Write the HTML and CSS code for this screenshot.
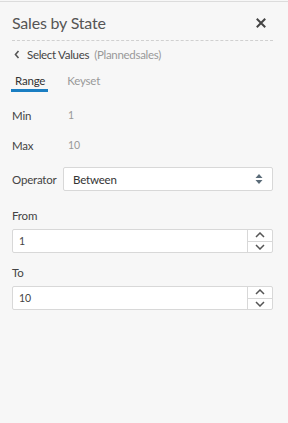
FILE: index.html
```html
<!DOCTYPE html>
<html>
<head>
<meta charset="utf-8">
<link rel="stylesheet" href="styles.css">
</head>
<body>
<div class="panel">
  <div class="header">
    <div class="title">Sales by State</div>
    <svg class="close" width="10" height="10" viewBox="0 0 10 10"><path d="M1.5 1.5 L8.5 8.5 M8.5 1.5 L1.5 8.5" stroke="#444" stroke-width="2" stroke-linecap="square"/></svg>
  </div>
  <div class="crumb">
    <svg class="back" width="6" height="9" viewBox="0 0 6 9"><path d="M4.5 1 L1.5 4.5 L4.5 8" stroke="#555" stroke-width="1.6" fill="none"/></svg>
    <span class="crumb-main">Select Values</span>
    <span class="crumb-sub">(Plannedsales)</span>
  </div>
  <div class="tabs">
    <div class="tab active">Range</div>
    <div class="tab">Keyset</div>
  </div>
  <div class="info">
    <div class="row"><span class="lbl">Min</span><span class="val">1</span></div>
    <div class="row"><span class="lbl">Max</span><span class="val">10</span></div>
  </div>
  <div class="op-row">
    <span class="op-lbl">Operator</span>
    <div class="select">
      <span>Between</span>
      <svg width="8" height="12" viewBox="0 0 8 12"><path d="M4 1 L7.5 5 L0.5 5 Z M4 11 L7.5 7 L0.5 7 Z" fill="#5a6b78"/></svg>
    </div>
  </div>
  <div class="field first">
    <div class="field-lbl">From</div>
    <div class="num">
      <span class="num-val">1</span>
      <div class="spin">
        <div class="sb"><svg width="10" height="6" viewBox="0 0 10 6"><path d="M1 5 L5 1 L9 5" stroke="#555" stroke-width="1.5" fill="none"/></svg></div>
        <div class="sb"><svg width="10" height="6" viewBox="0 0 10 6"><path d="M1 1 L5 5 L9 1" stroke="#555" stroke-width="1.5" fill="none"/></svg></div>
      </div>
    </div>
  </div>
  <div class="field">
    <div class="field-lbl">To</div>
    <div class="num">
      <span class="num-val">10</span>
      <div class="spin">
        <div class="sb"><svg width="10" height="6" viewBox="0 0 10 6"><path d="M1 5 L5 1 L9 5" stroke="#555" stroke-width="1.5" fill="none"/></svg></div>
        <div class="sb"><svg width="10" height="6" viewBox="0 0 10 6"><path d="M1 1 L5 5 L9 1" stroke="#555" stroke-width="1.5" fill="none"/></svg></div>
      </div>
    </div>
  </div>
</div>
</body>
</html>
```
FILE: styles.css
```css
html, body {
  margin: 0;
  padding: 0;
  background: #f7f7f7;
}
body {
  font-family: Lato, "Open Sans", sans-serif;
  color: #333;
  width: 288px;
  height: 423px;
  overflow: hidden;
}
.panel {
  border-top: 1px solid #dcdcdc;
  margin-top: 1px;
  padding: 0 15px 0 12px;
}
.header {
  display: flex;
  align-items: center;
  justify-content: space-between;
  height: 38px;
  border-bottom: 1px dashed #d0d0d0;
}
.title {
  font-size: 16px;
  color: #555;
  padding-top: 3px;
  letter-spacing: -0.2px;
}
.close {
  margin-right: 7px;
  margin-top: 3px;
}
.crumb {
  display: flex;
  align-items: center;
  height: 26px;
  font-size: 11.5px;
  letter-spacing: -0.3px;
  padding-left: 2px;
}
.back { margin-right: 7px; }
.crumb-main { color: #444; }
.crumb-sub { color: #999; margin-left: 5px; }
.tabs {
  display: flex;
  gap: 16px;
  font-size: 11.5px;
  letter-spacing: -0.2px;
}
.tab {
  color: #999;
  padding: 6px 3px 0;
  height: 16px;
  line-height: 15px;
}
.tab.active {
  color: #333;
  border-bottom: 3px solid #1a7ec2;
  padding: 6px 3px 0 4px;
  margin-left: -1px;
}
.info { padding-top: 8px; }
.row {
  display: flex;
  height: 30px;
  align-items: center;
  font-size: 11.5px;
  letter-spacing: -0.2px;
}
.lbl { width: 56px; color: #444; }
.val { color: #999; font-size: 10.5px; }
.op-row {
  display: flex;
  align-items: center;
  margin-top: 7px;
  font-size: 11.5px;
  letter-spacing: -0.2px;
}
.op-lbl { width: 51px; color: #444; }
.select {
  flex: 1;
  height: 22px;
  background: #fff;
  border: 1px solid #d8d8d8;
  border-radius: 2px;
  display: flex;
  align-items: center;
  justify-content: space-between;
  padding: 0 9px 0 9px;
  color: #333;
}
.field { margin-top: 11px; }
.field.first { margin-top: 16px; }
.field-lbl {
  font-size: 11.5px;
  letter-spacing: -0.2px;
  color: #444;
  height: 18px;
  line-height: 18px;
  margin-bottom: 4px;
}
.num {
  height: 22px;
  background: #fff;
  border: 1px solid #d8d8d8;
  border-radius: 2px;
  display: flex;
  align-items: center;
  justify-content: space-between;
  font-size: 10.5px;
}
.num-val { padding-left: 6px; color: #444; }
.spin {
  width: 24px;
  height: 22px;
  border-left: 1px solid #d8d8d8;
  display: flex;
  flex-direction: column;
}
.sb {
  flex: 1;
  display: flex;
  align-items: center;
  justify-content: center;
}
.sb + .sb { border-top: 1px solid #d8d8d8; }
```
